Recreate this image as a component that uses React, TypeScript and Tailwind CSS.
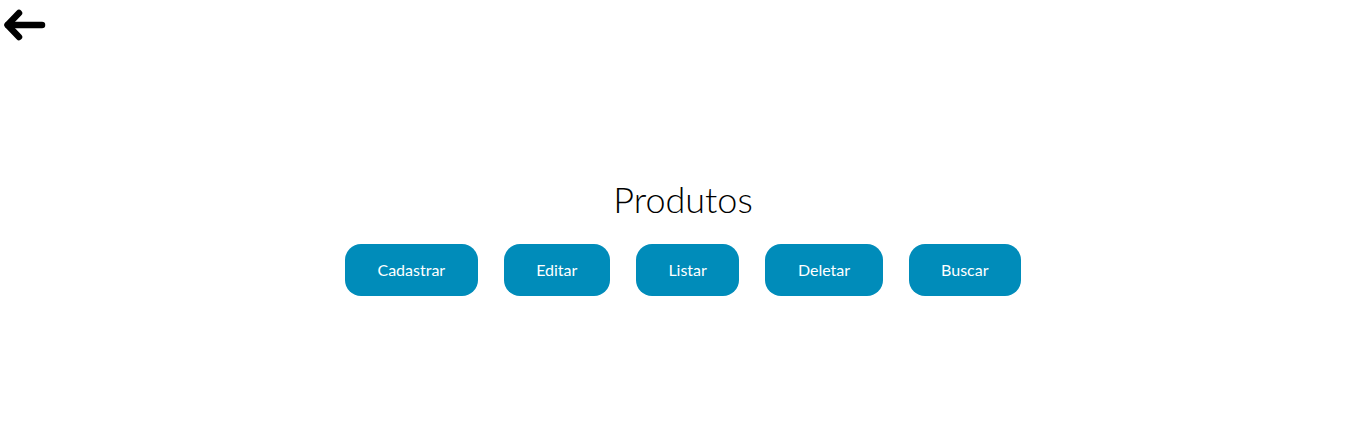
import React from "react";

export default function App() {
  const buttons = ["Cadastrar", "Editar", "Listar", "Deletar", "Buscar"];
  return (
    <div className="w-[1366px] h-[432px] bg-white font-['Lato',sans-serif]">
      <div className="h-[48px]">
        <svg width="50" height="48" viewBox="0 0 50 48">
          <g stroke="#000" strokeWidth="6.5" strokeLinecap="round" strokeLinejoin="round" fill="none">
            <path d="M8 25 H42" />
            <path d="M19 13 L7.5 25 L19 37" />
          </g>
        </svg>
      </div>
      <div className="flex flex-col items-center pt-[129px]">
        <h1 className="text-[36px] font-light text-black leading-[44px]">Produtos</h1>
        <div className="flex gap-[26px] mt-[23px]">
          {buttons.map((b) => (
            <button
              key={b}
              className="h-[52px] px-[32.5px] rounded-[16px] bg-[#008CBA] text-white text-[16px]"
            >
              {b}
            </button>
          ))}
        </div>
      </div>
    </div>
  );
}
